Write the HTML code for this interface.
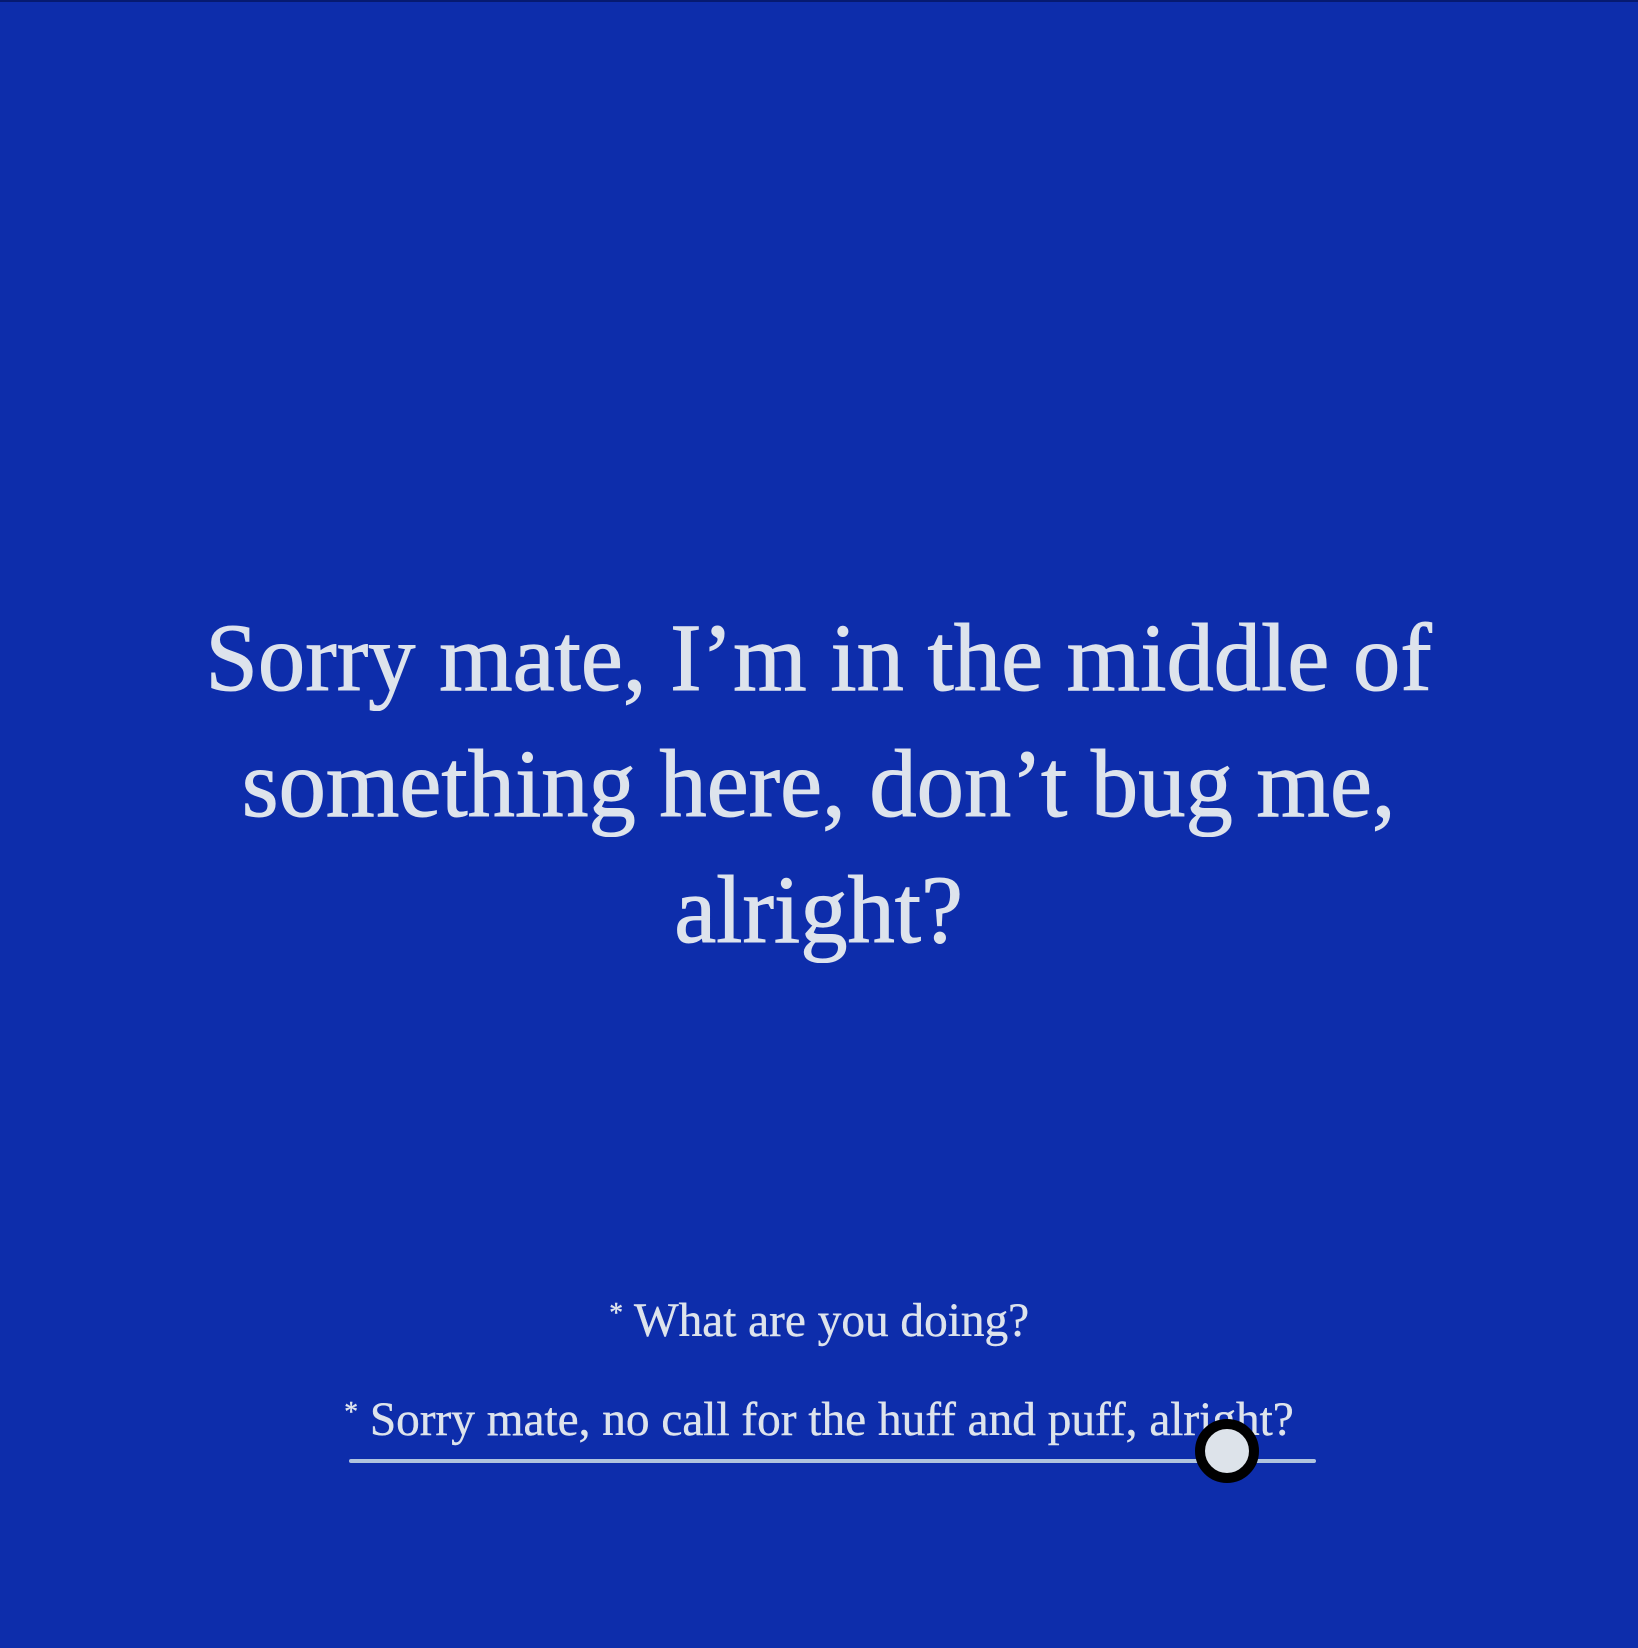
<!DOCTYPE html>
<html><head><meta charset="utf-8"><style>
html,body{margin:0;padding:0;}
body{width:1638px;height:1648px;background:#0d2dab;position:relative;overflow:hidden;border-top:2px solid #061a70;box-sizing:border-box;font-family:"Liberation Serif",serif;color:#dde3ec;}
.l{position:absolute;left:0;width:1638px;text-align:center;line-height:1;white-space:nowrap;}
.l span{display:inline-block;transform:scaleX(0.985);transform-origin:center;}
.h{font-size:96px;-webkit-text-stroke:1px #dde3ec;}
.s{font-size:48px;-webkit-text-stroke:0.4px #dde3ec;}
.s sup{font-size:28px;vertical-align:14px;}
.bar{position:absolute;left:349px;top:1457px;width:967px;height:4px;background:#b0c4de;border-radius:2px;}
.knob{position:absolute;left:1195px;top:1417px;width:44px;height:44px;border:10px solid #000;border-radius:50%;background:#dde3ea;}
</style></head><body>
<div class="l h" style="top:608px"><span>Sorry mate, I’m in the middle of</span></div>
<div class="l h" style="top:734px"><span>something here, don’t bug me,</span></div>
<div class="l h" style="top:860px"><span>alright?</span></div>
<div class="l s" style="top:1295px"><span><sup>*</sup> What are you doing?</span></div>
<div class="l s" style="top:1394px"><span><sup>*</sup> Sorry mate, no call for the huff and puff, alright?</span></div>
<div class="bar"></div>
<div class="knob"></div>
</body></html>
